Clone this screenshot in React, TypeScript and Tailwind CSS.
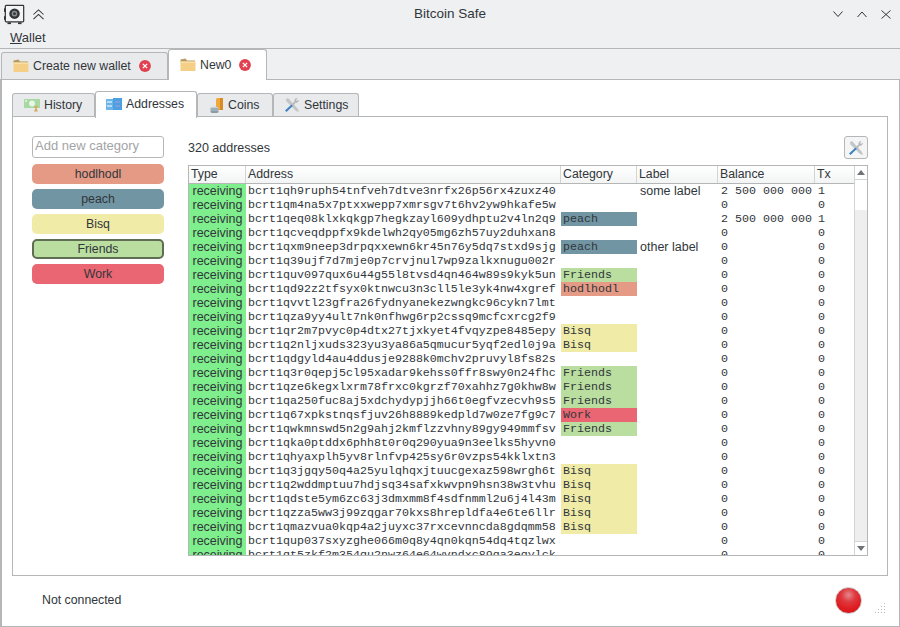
const font = "font-['Liberation_Sans',Arial,sans-serif]"

type Row = { address: string; category?: string; label?: string; balance?: string; tx?: string }

const rows: Row[] = [
  { address: 'bcrt1qh9ruph54tnfveh7dtve3nrfx26p56rx4zuxz40', label: 'some label', balance: '2 500 000 000', tx: '1' },
  { address: 'bcrt1qm4na5x7ptxxwepp7xmrsgv7t6hv2yw9hkafe5w' },
  { address: 'bcrt1qeq08klxkqkgp7hegkzayl609ydhptu2v4ln2q9', category: 'peach', balance: '2 500 000 000', tx: '1' },
  { address: 'bcrt1qcveqdppfx9kdelwh2qy05mg6zh57uy2duhxan8' },
  { address: 'bcrt1qxm9neep3drpqxxewn6kr45n76y5dq7stxd9sjg', category: 'peach', label: 'other label' },
  { address: 'bcrt1q39ujf7d7mje0p7crvjnul7wp9zalkxnugu002r' },
  { address: 'bcrt1quv097qux6u44g55l8tvsd4qn464w89s9kyk5un', category: 'Friends' },
  { address: 'bcrt1qd92z2tfsyx0ktnwcu3n3cll5le3yk4nw4xgref', category: 'hodlhodl' },
  { address: 'bcrt1qvvtl23gfra26fydnyanekezwngkc96cykn7lmt' },
  { address: 'bcrt1qza9yy4ult7nk0nfhwg6rp2cssq9mcfcxrcg2f9' },
  { address: 'bcrt1qr2m7pvyc0p4dtx27tjxkyet4fvqyzpe8485epy', category: 'Bisq' },
  { address: 'bcrt1q2nljxuds323yu3ya86a5qmucur5yqf2edl0j9a', category: 'Bisq' },
  { address: 'bcrt1qdgyld4au4ddusje9288k0mchv2pruvyl8fs82s' },
  { address: 'bcrt1q3r0qepj5cl95xadar9kehss0ffr8swy0n24fhc', category: 'Friends' },
  { address: 'bcrt1qze6kegxlxrm78frxc0kgrzf70xahhz7g0khw8w', category: 'Friends' },
  { address: 'bcrt1qa250fuc8aj5xdchydypjjh66t0egfvzecvh9s5', category: 'Friends' },
  { address: 'bcrt1q67xpkstnqsfjuv26h8889kedpld7w0ze7fg9c7', category: 'Work' },
  { address: 'bcrt1qwkmnswd5n2g9ahj2kmflzzvhny89gy949mmfsv', category: 'Friends' },
  { address: 'bcrt1qka0ptddx6phh8t0r0q290yua9n3eelks5hyvn0' },
  { address: 'bcrt1qhyaxplh5yv8rlnfvp425sy6r0vzps54kklxtn3' },
  { address: 'bcrt1q3jgqy50q4a25yulqhqxjtuucgexaz598wrgh6t', category: 'Bisq' },
  { address: 'bcrt1q2wddmptuu7hdjsq34safxkwvpn9hsn38w3tvhu', category: 'Bisq' },
  { address: 'bcrt1qdste5ym6zc63j3dmxmm8f4sdfnmml2u6j4l43m', category: 'Bisq' },
  { address: 'bcrt1qzza5ww3j99zqgar70kxs8hrepldfa4e6te6llr', category: 'Bisq' },
  { address: 'bcrt1qmazvua0kqp4a2juyxc37rxcevnncda8gdqmm58', category: 'Bisq' },
  { address: 'bcrt1qup037sxyzghe066m0q8y4qn0kqn54dq4tqzlwx' },
  { address: 'bcrt1qt5zkf2m354qu2nwz64e64wvndxc89qa3eqylck' },
]

const categoryColors: Record<string, string> = {
  hodlhodl: 'bg-[#e59a85]',
  peach: 'bg-[#7295a3]',
  Bisq: 'bg-[#f0eba7]',
  Friends: 'bg-[#b9dea0]',
  Work: 'bg-[#ea6672]',
}

const mono = "font-['Liberation_Mono','Courier_New',monospace] text-[11.67px] text-[#31363b]"

function FolderIcon() {
  return (
    <svg width="16" height="14" viewBox="0 0 16 14" className="shrink-0">
      <path d="M0.5 1.5 L5.5 0.5 L7 2.5 L15 2.5 L15 4 L0.5 4 Z" fill="#b79a62" />
      <path d="M0.5 3.5 L15.5 3.5 L15.5 13 L0.5 13 Z" fill="#f4cf85" />
      <path d="M0.5 3.5 L15.5 3.5 L15.5 5 L0.5 5 Z" fill="#f9e0a8" />
    </svg>
  )
}

function CloseBadge() {
  return (
    <svg width="12" height="12" viewBox="0 0 13 13" className="shrink-0">
      <circle cx="6.5" cy="6.5" r="6.4" fill="#e0404f" />
      <path d="M4.2 4.2 L8.8 8.8 M8.8 4.2 L4.2 8.8" stroke="#fff" strokeWidth="1.5" />
    </svg>
  )
}

function HistoryIcon() {
  return (
    <svg width="16" height="14" viewBox="0 0 16 14" className="shrink-0">
      <rect x="0" y="1" width="16" height="9" fill="#a8d8a4" />
      <circle cx="8" cy="5.5" r="3" fill="#e8f6e4" />
      <rect x="1" y="2" width="2" height="2" fill="#d9efd6" />
      <path d="M10 8 L14 8 L12.6 10.5 L14 13.5 L10 13.5 L11.4 10.5 Z" fill="#d4a95c" />
    </svg>
  )
}

function AddressesIcon() {
  return (
    <svg width="16" height="13" viewBox="0 0 16 13" className="shrink-0">
      <rect x="0" y="1" width="7" height="11" fill="#6bb5ea" />
      <rect x="7" y="0" width="9" height="12" fill="#4c9fe3" />
      <rect x="1" y="3" width="5" height="2" fill="#b9dcf6" />
      <rect x="1" y="7" width="5" height="2" fill="#b9dcf6" />
      <rect x="9" y="3" width="5" height="2" fill="#7aa0d8" />
      <rect x="9" y="7" width="5" height="2" fill="#7aa0d8" />
    </svg>
  )
}

function CoinsIcon() {
  return (
    <svg width="14" height="15" viewBox="0 0 14 15" className="shrink-0">
      <rect x="6" y="0" width="7" height="12" rx="1.5" fill="#f0a83c" />
      <rect x="10" y="0" width="3" height="12" fill="#d98c22" />
      <ellipse cx="4.5" cy="10" rx="4" ry="1.6" fill="#c9d2d6" />
      <rect x="0.5" y="10" width="8" height="4" fill="#9fb0b8" />
      <ellipse cx="4.5" cy="14" rx="4" ry="1" fill="#8a9ba3" />
    </svg>
  )
}

function ToolsIcon() {
  return (
    <svg width="16" height="16" viewBox="0 0 16 16" className="shrink-0">
      <path d="M2 2 L4 1 L14 12 L15 15 L12 14 L2.5 4.5 Z" fill="#c3c6c8" />
      <path d="M13.5 1 C11 1 10 3 10.5 4.5 L8 7 L9.5 8.5 L11.5 5.8 C13 6.2 15 5 14.8 2.6 L13 4 L12 3 Z" fill="#b4b8ba" />
      <path d="M7.5 7.5 L1 13.5 L2.5 15 L8.8 9 Z" fill="#3f83c4" />
    </svg>
  )
}

function SafeIcon() {
  return (
    <svg width="21" height="21" viewBox="0 0 24 24" className="shrink-0">
      <rect x="1.5" y="1.5" width="21" height="19" rx="1" fill="#f4f4f4" stroke="#31363b" strokeWidth="1.4" />
      <rect x="0" y="5" width="2" height="4" fill="#31363b" />
      <rect x="0" y="14" width="2" height="4" fill="#31363b" />
      <rect x="4" y="21" width="4" height="2" fill="#31363b" />
      <rect x="16" y="21" width="4" height="2" fill="#31363b" />
      <circle cx="12" cy="11" r="6" fill="#31363b" />
      <circle cx="12" cy="11" r="3.2" fill="#8b8f92" />
      <circle cx="12" cy="11" r="1.6" fill="#31363b" />
    </svg>
  )
}

function ChevronsUp() {
  return (
    <svg width="13" height="11" viewBox="0 0 14 12" fill="none" stroke="#31363b" strokeWidth="1.1" className="shrink-0">
      <path d="M1.5 6 L7 1 L12.5 6" />
      <path d="M1.5 11 L7 6 L12.5 11" />
    </svg>
  )
}

function TitleBar() {
  return (
    <div className="h-[33px] pb-[5px] flex items-center">
      <div className="w-[70px] pl-[4px] flex items-center gap-[7px]">
        <SafeIcon />
        <ChevronsUp />
      </div>
      <div className="flex-1 text-center text-[13.5px] text-[#31363b]">Bitcoin Safe</div>
      <div className="w-[70px] flex items-center justify-end gap-[14px] pr-[9px]">
        <svg width="10" height="7" viewBox="0 0 10 7" fill="none" stroke="#31363b"><path d="M0.5 0.5 L5 5.5 L9.5 0.5" /></svg>
        <svg width="10" height="7" viewBox="0 0 10 7" fill="none" stroke="#31363b"><path d="M0.5 6 L5 1 L9.5 6" /></svg>
        <svg width="10" height="9" viewBox="0 0 10 9" fill="none" stroke="#31363b"><path d="M0.5 0.5 L9.5 8.5 M9.5 0.5 L0.5 8.5" /></svg>
      </div>
    </div>
  )
}

function OuterTabs() {
  return (
    <div className="h-[31px] flex items-end pl-[1px] border-t border-[#b4b6b8]">
      <div className="w-[167px] h-[27px] flex items-center pl-[11px] gap-[3px] bg-[#e9eaeb] border border-b-0 border-[#b4b6b8] rounded-t-[3px] text-[12.3px] text-[#31363b]">
        <FolderIcon />
        <span className="ml-[1px]">Create new wallet</span>
        <span className="ml-[5px]"><CloseBadge /></span>
      </div>
      <div className="w-[99px] h-[31px] -mb-[1px] z-10 flex items-center pl-[11px] gap-[3px] bg-white border border-b-0 border-[#b4b6b8] rounded-t-[3px] text-[12.3px] text-[#31363b]">
        <FolderIcon />
        <span className="ml-[1px]">New0</span>
        <span className="ml-[5px]"><CloseBadge /></span>
      </div>
    </div>
  )
}

function InnerTab({ label, icon, size, active }: { label: string; icon: React.ReactNode; size: string; active?: boolean }) {
  return (
    <div
      className={
        active
          ? `${size} h-[27px] -mb-[1px] pb-[2px] z-10 flex items-center gap-[4px] bg-white border border-b-0 border-[#b4b6b8] rounded-t-[3px] text-[12.3px] text-[#31363b]`
          : `${size} h-[24px] pb-[1px] flex items-center gap-[4px] bg-[#e9eaeb] border border-b-0 border-[#b4b6b8] rounded-t-[3px] text-[12.3px] text-[#31363b]`
      }
    >
      {icon}
      <span>{label}</span>
    </div>
  )
}

function CategoryList() {
  return (
    <div className="w-[132px] shrink-0 flex flex-col gap-[5px]">
      <div className="h-[22px] pb-[2px] bg-white border border-[#b4b6b8] rounded-[3px] pl-[2px] flex items-center text-[13px] text-[#a2a4a6] mb-[1px]">
        Add new category
      </div>
      {['hodlhodl', 'peach', 'Bisq', 'Friends', 'Work'].map((name) => (
        <div
          key={name}
          className={`h-[20px] rounded-[5px] flex items-center justify-center text-[12.3px] text-[#31363b] ${categoryColors[name]} ${
            name === 'Friends' ? 'border-2 border-[#5f6e53]' : ''
          }`}
        >
          {name}
        </div>
      ))}
    </div>
  )
}

function HeaderCell({ label, width }: { label: string; width: string }) {
  return (
    <div className={`${width} shrink-0 h-full flex items-center pl-[2px] border-r border-[#d3d4d5] text-[12.3px] text-[#31363b]`}>
      {label}
    </div>
  )
}

function AddressTable() {
  return (
    <div className="h-[391px] border border-[#b4b6b8] flex overflow-hidden">
      <div className="w-[665px] shrink-0 flex flex-col">
        <div className="h-[18px] shrink-0 flex bg-gradient-to-b from-white to-[#f3f4f4] border-b border-[#b4b6b8]">
          <HeaderCell label="Type" width="w-[57px]" />
          <HeaderCell label="Address" width="w-[315px]" />
          <HeaderCell label="Category" width="w-[76px]" />
          <HeaderCell label="Label" width="w-[81px]" />
          <HeaderCell label="Balance" width="w-[97px]" />
          <div className="flex-1 pl-[2px] flex items-center text-[12.3px] text-[#31363b]">Tx</div>
        </div>
        <div className="flex-1 overflow-hidden">
          {rows.map((row) => (
            <div key={row.address} className="h-[14px] flex leading-[14px]">
              <div className="w-[57px] shrink-0 bg-[#7fee8c] text-center text-[12.5px] text-[#31363b]">receiving</div>
              <div className={`w-[315px] shrink-0 pl-[2px] ${mono}`}>{row.address}</div>
              <div className={`w-[76px] shrink-0 pl-[2px] ${mono} ${row.category ? categoryColors[row.category] : ''}`}>
                {row.category}
              </div>
              <div className="w-[81px] shrink-0 pl-[3px] text-[12.5px] text-[#31363b]">{row.label}</div>
              <div className={`w-[97px] shrink-0 pl-[3px] ${mono}`}>{row.balance ?? '0'}</div>
              <div className={`flex-1 pl-[3px] ${mono}`}>{row.tx ?? '0'}</div>
            </div>
          ))}
        </div>
      </div>
      <div className="flex-1 flex flex-col border-l border-[#d3d4d5] bg-[#eeeeef]">
        <div className="h-[14px] bg-white border-b border-[#d3d4d5] flex items-center justify-center">
          <svg width="8" height="5" viewBox="0 0 8 5"><path d="M0 5 L4 0 L8 5 Z" fill="#6f7376" /></svg>
        </div>
        <div className="h-[30px] bg-white" />
        <div className="flex-1" />
        <div className="h-[14px] bg-white border-t border-[#d3d4d5] flex items-center justify-center">
          <svg width="8" height="5" viewBox="0 0 8 5"><path d="M0 0 L8 0 L4 5 Z" fill="#6f7376" /></svg>
        </div>
      </div>
    </div>
  )
}

export default function App() {
  return (
    <div className={`w-[900px] h-[627px] flex flex-col overflow-hidden bg-[#eff0f1] ${font}`}>
      <TitleBar />
      <div className="h-[15px] pb-[5px] pl-[10px] flex items-center text-[13px] text-[#31363b]">
        <span><span className="underline">W</span>allet</span>
      </div>
      <OuterTabs />
      <div className="flex-1 flex flex-col bg-white border border-l-2 border-[#b4b6b8] pl-[10px] pr-[11px]">
        <div className="h-[37px] -mb-[1px] flex items-end">
          <InnerTab label="History" icon={<HistoryIcon />} size="w-[83px] pl-[11px]" />
          <InnerTab label="Addresses" icon={<AddressesIcon />} size="w-[102px] pl-[10px]" active />
          <InnerTab label="Coins" icon={<CoinsIcon />} size="w-[76px] pl-[12px]" />
          <InnerTab label="Settings" icon={<ToolsIcon />} size="w-[86px] pl-[10px]" />
        </div>
        <div className="h-[460px] border border-[#b4b6b8] flex pl-[19px] pr-[19px] pt-[19px] gap-[24px]">
          <CategoryList />
          <div className="flex-1 flex flex-col">
            <div className="h-[29px] flex items-start justify-between">
              <span className="text-[12.5px] text-[#31363b] mt-[3px]">320 addresses</span>
              <div className="w-[24px] h-[23px] border border-[#b4b6b8] rounded-[3px] bg-[#f5f5f6] flex items-center justify-center">
                <ToolsIcon />
              </div>
            </div>
            <AddressTable />
          </div>
        </div>
        <div className="flex-1 pb-[2px] flex items-center pl-[30px] pr-[2px]">
          <span className="flex-1 text-[12.3px] text-[#31363b]">Not connected</span>
          <div className="w-[27px] h-[27px] rounded-full border border-[#c9c9c9] bg-[radial-gradient(circle_at_50%_28%,#e5878c_0%,#de3a3f_32%,#e01b20_65%,#c81a1e_100%)]" />
          <svg width="11" height="11" viewBox="0 0 11 11" className="ml-[13px] mt-[15px]" fill="#b4b6b8">
            <rect x="9" y="1" width="1" height="1" />
            <rect x="6" y="4" width="1" height="1" />
            <rect x="9" y="4" width="1" height="1" />
            <rect x="3" y="7" width="1" height="1" />
            <rect x="6" y="7" width="1" height="1" />
            <rect x="9" y="7" width="1" height="1" />
            <rect x="0" y="10" width="1" height="1" />
            <rect x="3" y="10" width="1" height="1" />
            <rect x="6" y="10" width="1" height="1" />
            <rect x="9" y="10" width="1" height="1" />
          </svg>
        </div>
      </div>
    </div>
  )
}
